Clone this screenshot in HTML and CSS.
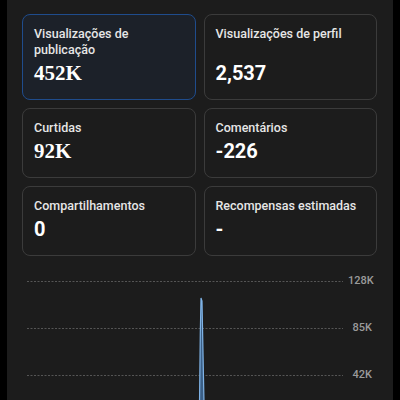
FILE: index.html
```html
<!DOCTYPE html>
<html lang="pt">
<head>
<meta charset="utf-8">
<link rel="stylesheet" href="styles.css">
</head>
<body>
<div class="panel">
  <div class="grid">
    <div class="card active">
      <div class="label">Visualizações de publicação</div>
      <div class="value slab">452K</div>
    </div>
    <div class="card">
      <div class="label">Visualizações de perfil</div>
      <div class="value">2,537</div>
    </div>
    <div class="card">
      <div class="label">Curtidas</div>
      <div class="value slab">92K</div>
    </div>
    <div class="card">
      <div class="label">Comentários</div>
      <div class="value">-226</div>
    </div>
    <div class="card">
      <div class="label">Compartilhamentos</div>
      <div class="value">0</div>
    </div>
    <div class="card">
      <div class="label">Recompensas estimadas</div>
      <div class="value">-</div>
    </div>
  </div>
  <div class="chart">
    <svg class="plot" width="316" height="130" viewBox="0 0 316 130">
      <line x1="0" y1="8.5" x2="316" y2="8.5" class="grid-line"/>
      <line x1="0" y1="55.5" x2="316" y2="55.5" class="grid-line"/>
      <line x1="0" y1="102.5" x2="316" y2="102.5" class="grid-line"/>
      <path d="M172.5 130 L173.3 60 L174 25 L175 28 L176 80 L177 130 Z" class="spike-fill"/>
      <path d="M172.5 130 L173.3 60 L174 25 L175 28 L176 80 L177 130" class="spike-line"/>
    </svg>
    <div class="axis">
      <span>128K</span>
      <span>85K</span>
      <span>42K</span>
    </div>
  </div>
</div>
</body>
</html>
```
FILE: styles.css
```css
html, body {
  margin: 0;
  padding: 0;
  background: #000;
  width: 400px;
  height: 400px;
  overflow: hidden;
}
body {
  font-family: Roboto, "Liberation Sans", sans-serif;
}
.panel {
  margin: 0 7px;
  width: 386px;
  height: 400px;
  background: #1c1c1c;
  padding: 14px 16px 0 15px;
  box-sizing: border-box;
  overflow: hidden;
}
.grid {
  display: grid;
  grid-template-columns: 1fr 1fr;
  gap: 8px;
}
.card {
  display: flex;
  flex-direction: column;
  border: 1px solid #3b3b3b;
  border-radius: 8px;
  padding: 11px 11px 13px 11px;
  min-height: 70px;
  box-sizing: border-box;
}
.card.active {
  border-color: #1f4c8c;
  background: #1c2129;
}
.label {
  color: #e6e6e6;
  font-size: 12.5px;
  font-weight: 500;
  line-height: 16px;
}
.value {
  margin-top: auto;
  padding-top: 2px;
  color: #fff;
  font-size: 20px;
  font-weight: 700;
  line-height: 26px;
}
.value.slab {
  font-family: "Liberation Serif", serif;
  font-size: 21px;
}
.chart {
  display: flex;
  gap: 5px;
  margin-top: 17px;
  padding: 0 5px;
}
.plot {
  flex: none;
  display: block;
}
.grid-line {
  stroke: #555;
  stroke-width: 1;
  stroke-dasharray: 2 1.5;
}
.spike-fill {
  fill: #3b5f86;
}
.spike-line {
  fill: none;
  stroke: #7fb3e6;
  stroke-width: 1.2;
}
.axis {
  display: flex;
  flex-direction: column;
  gap: 33px;
  width: 24px;
  text-align: right;
  padding-top: 1px;
}
.axis span {
  color: #9a9a9a;
  font-size: 11px;
  font-weight: 500;
  line-height: 14px;
}
```
